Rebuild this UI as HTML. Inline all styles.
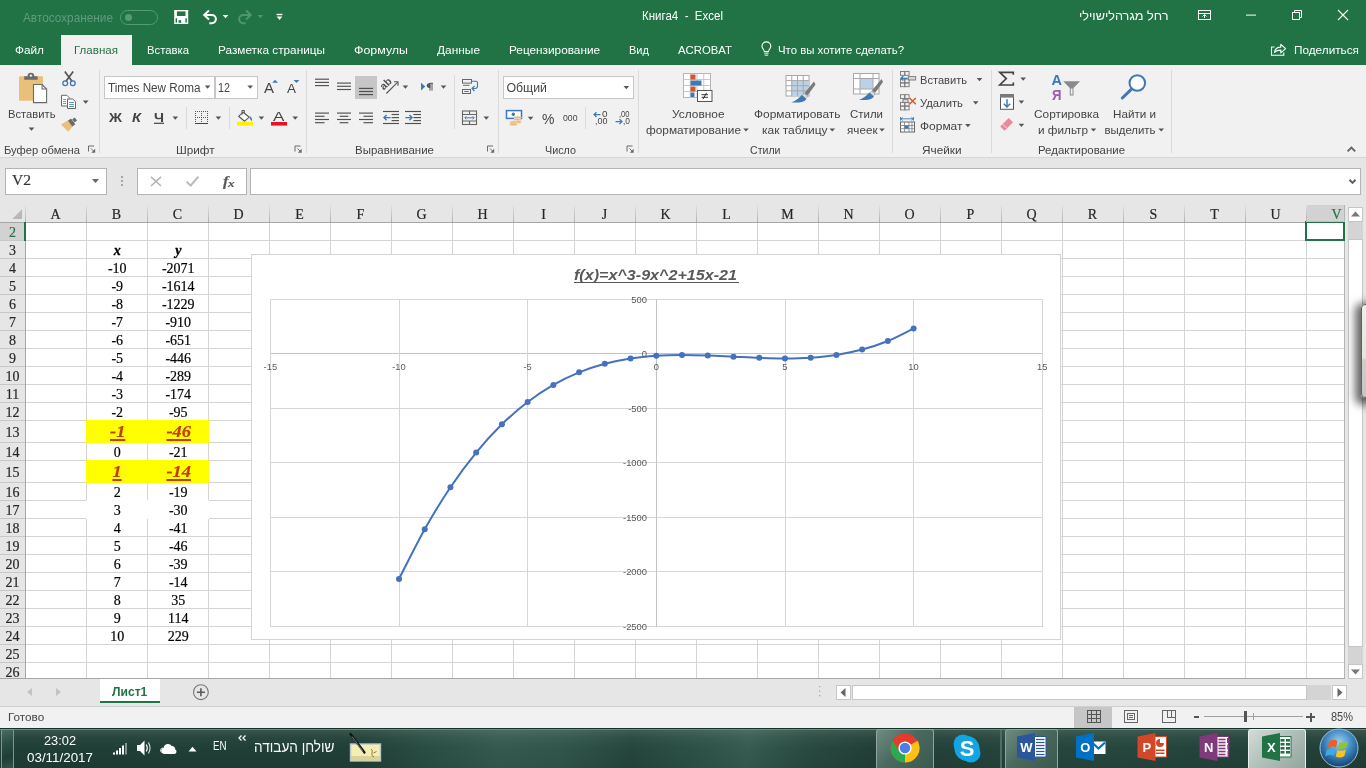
<!DOCTYPE html>
<html><head><meta charset="utf-8"><title>Excel</title>
<style>
html,body{margin:0;padding:0;}
body{width:1366px;height:768px;overflow:hidden;position:relative;background:#e6e6e6;font-family:"Liberation Sans",sans-serif;}
body div, body svg, body span.t{position:absolute;box-sizing:border-box;}
span.t{white-space:pre;transform-origin:0 50%;}
span.sf{font-family:"Liberation Serif",serif;-webkit-text-stroke:0.18px currentColor;}
span.mo{font-family:"Liberation Mono",monospace;}
#root{left:0;top:0;width:1366px;height:768px;overflow:hidden;will-change:transform;}
</style></head><body><div id="root">
<div style="left:0px;top:0px;width:1366px;height:65px;background:#217346;"></div><div style="left:0px;top:65px;width:1366px;height:93px;background:#f1f1f1;"></div><div style="left:0px;top:157px;width:1366px;height:1px;background:#d6d6d6;"></div><div style="left:0px;top:158px;width:1366px;height:47px;background:#e6e6e6;"></div><div style="left:61px;top:35px;width:71px;height:30px;background:#f1f1f1;"></div><span class="t" style="left:23px;top:9.50px;font-size:12.6px;line-height:16px;color:#5f9c7d;transform:scaleX(0.9373);">Автосохранение</span><div style="left:120px;top:9.5px;width:38px;height:15.5px;border:1px solid #549a74;border-radius:8px;"></div><div style="left:124.5px;top:13.5px;width:7.5px;height:7.5px;border-radius:50%;background:#549a74;"></div><span class="t" style="left:642px;top:7.60px;font-size:12.3px;line-height:16px;color:#fff;transform:scaleX(0.9359);">Книга4  -  Excel</span><span class="t" style="left:1078.5px;top:7.60px;font-size:12.5px;line-height:16px;color:#fff;transform:scaleX(1.0160);">רחל מגרהלישוילי</span><span class="t" style="left:15px;top:42.50px;font-size:11.8px;line-height:15px;color:#fff;">Файл</span><span class="t" style="left:74px;top:42.50px;font-size:11.8px;line-height:15px;color:#217346;transform:scaleX(0.9798);">Главная</span><span class="t" style="left:147px;top:42.50px;font-size:11.8px;line-height:15px;color:#fff;transform:scaleX(0.9576);">Вставка</span><span class="t" style="left:218px;top:42.50px;font-size:11.8px;line-height:15px;color:#fff;">Разметка страницы</span><span class="t" style="left:354px;top:42.50px;font-size:11.8px;line-height:15px;color:#fff;transform:scaleX(1.0517);">Формулы</span><span class="t" style="left:437px;top:42.50px;font-size:11.8px;line-height:15px;color:#fff;transform:scaleX(1.0088);">Данные</span><span class="t" style="left:509px;top:42.50px;font-size:11.8px;line-height:15px;color:#fff;">Рецензирование</span><span class="t" style="left:629px;top:42.50px;font-size:11.8px;line-height:15px;color:#fff;transform:scaleX(0.9370);">Вид</span><span class="t" style="left:678px;top:42.50px;font-size:11.8px;line-height:15px;color:#fff;transform:scaleX(0.9616);">ACROBAT</span><span class="t" style="left:778px;top:42.50px;font-size:11.8px;line-height:15px;color:#fff;transform:scaleX(0.9661);">Что вы хотите сделать?</span><span class="t" style="left:1294px;top:42.50px;font-size:11.8px;line-height:15px;color:#fff;transform:scaleX(0.9976);">Поделиться</span><div style="left:0px;top:205px;width:1345px;height:474px;background:#fff;"></div><div style="left:0px;top:205px;width:1345px;height:17px;background:#e6e6e6;"></div><div style="left:0px;top:222px;width:25px;height:457px;background:#e6e6e6;"></div><div style="left:1306px;top:205px;width:39px;height:17px;background:#d2d2d2;"></div><div style="left:0px;top:223px;width:25px;height:17px;background:#d2d2d2;"></div><svg style="left:0;top:0" width="1366" height="768" shape-rendering="crispEdges"><defs><linearGradient id="hsep" x1="0" y1="0" x2="0" y2="1"><stop offset="0" stop-color="#e0e0e0"/><stop offset="1" stop-color="#b2b2b2"/></linearGradient></defs><rect x="25" y="240" width="1320" height="1" fill="#d4d4d4"/><rect x="0" y="240" width="25" height="1" fill="#c8c8c8"/><rect x="25" y="258" width="1320" height="1" fill="#d4d4d4"/><rect x="0" y="258" width="25" height="1" fill="#c8c8c8"/><rect x="25" y="276" width="1320" height="1" fill="#d4d4d4"/><rect x="0" y="276" width="25" height="1" fill="#c8c8c8"/><rect x="25" y="294" width="1320" height="1" fill="#d4d4d4"/><rect x="0" y="294" width="25" height="1" fill="#c8c8c8"/><rect x="25" y="312" width="1320" height="1" fill="#d4d4d4"/><rect x="0" y="312" width="25" height="1" fill="#c8c8c8"/><rect x="25" y="330" width="1320" height="1" fill="#d4d4d4"/><rect x="0" y="330" width="25" height="1" fill="#c8c8c8"/><rect x="25" y="348" width="1320" height="1" fill="#d4d4d4"/><rect x="0" y="348" width="25" height="1" fill="#c8c8c8"/><rect x="25" y="366" width="1320" height="1" fill="#d4d4d4"/><rect x="0" y="366" width="25" height="1" fill="#c8c8c8"/><rect x="25" y="384" width="1320" height="1" fill="#d4d4d4"/><rect x="0" y="384" width="25" height="1" fill="#c8c8c8"/><rect x="25" y="402" width="1320" height="1" fill="#d4d4d4"/><rect x="0" y="402" width="25" height="1" fill="#c8c8c8"/><rect x="25" y="420" width="1320" height="1" fill="#d4d4d4"/><rect x="0" y="420" width="25" height="1" fill="#c8c8c8"/><rect x="25" y="442" width="1320" height="1" fill="#d4d4d4"/><rect x="0" y="442" width="25" height="1" fill="#c8c8c8"/><rect x="25" y="460" width="1320" height="1" fill="#d4d4d4"/><rect x="0" y="460" width="25" height="1" fill="#c8c8c8"/><rect x="25" y="482" width="1320" height="1" fill="#d4d4d4"/><rect x="0" y="482" width="25" height="1" fill="#c8c8c8"/><rect x="25" y="500" width="1320" height="1" fill="#d4d4d4"/><rect x="0" y="500" width="25" height="1" fill="#c8c8c8"/><rect x="25" y="518" width="1320" height="1" fill="#d4d4d4"/><rect x="0" y="518" width="25" height="1" fill="#c8c8c8"/><rect x="25" y="536" width="1320" height="1" fill="#d4d4d4"/><rect x="0" y="536" width="25" height="1" fill="#c8c8c8"/><rect x="25" y="554" width="1320" height="1" fill="#d4d4d4"/><rect x="0" y="554" width="25" height="1" fill="#c8c8c8"/><rect x="25" y="572" width="1320" height="1" fill="#d4d4d4"/><rect x="0" y="572" width="25" height="1" fill="#c8c8c8"/><rect x="25" y="590" width="1320" height="1" fill="#d4d4d4"/><rect x="0" y="590" width="25" height="1" fill="#c8c8c8"/><rect x="25" y="608" width="1320" height="1" fill="#d4d4d4"/><rect x="0" y="608" width="25" height="1" fill="#c8c8c8"/><rect x="25" y="626" width="1320" height="1" fill="#d4d4d4"/><rect x="0" y="626" width="25" height="1" fill="#c8c8c8"/><rect x="25" y="644" width="1320" height="1" fill="#d4d4d4"/><rect x="0" y="644" width="25" height="1" fill="#c8c8c8"/><rect x="25" y="662" width="1320" height="1" fill="#d4d4d4"/><rect x="0" y="662" width="25" height="1" fill="#c8c8c8"/><rect x="86" y="223" width="1" height="456" fill="#d4d4d4"/><rect x="86" y="205" width="1" height="17" fill="url(#hsep)"/><rect x="147" y="223" width="1" height="456" fill="#d4d4d4"/><rect x="147" y="205" width="1" height="17" fill="url(#hsep)"/><rect x="208" y="223" width="1" height="456" fill="#d4d4d4"/><rect x="208" y="205" width="1" height="17" fill="url(#hsep)"/><rect x="269" y="223" width="1" height="456" fill="#d4d4d4"/><rect x="269" y="205" width="1" height="17" fill="url(#hsep)"/><rect x="330" y="223" width="1" height="456" fill="#d4d4d4"/><rect x="330" y="205" width="1" height="17" fill="url(#hsep)"/><rect x="391" y="223" width="1" height="456" fill="#d4d4d4"/><rect x="391" y="205" width="1" height="17" fill="url(#hsep)"/><rect x="452" y="223" width="1" height="456" fill="#d4d4d4"/><rect x="452" y="205" width="1" height="17" fill="url(#hsep)"/><rect x="513" y="223" width="1" height="456" fill="#d4d4d4"/><rect x="513" y="205" width="1" height="17" fill="url(#hsep)"/><rect x="574" y="223" width="1" height="456" fill="#d4d4d4"/><rect x="574" y="205" width="1" height="17" fill="url(#hsep)"/><rect x="635" y="223" width="1" height="456" fill="#d4d4d4"/><rect x="635" y="205" width="1" height="17" fill="url(#hsep)"/><rect x="696" y="223" width="1" height="456" fill="#d4d4d4"/><rect x="696" y="205" width="1" height="17" fill="url(#hsep)"/><rect x="757" y="223" width="1" height="456" fill="#d4d4d4"/><rect x="757" y="205" width="1" height="17" fill="url(#hsep)"/><rect x="818" y="223" width="1" height="456" fill="#d4d4d4"/><rect x="818" y="205" width="1" height="17" fill="url(#hsep)"/><rect x="879" y="223" width="1" height="456" fill="#d4d4d4"/><rect x="879" y="205" width="1" height="17" fill="url(#hsep)"/><rect x="940" y="223" width="1" height="456" fill="#d4d4d4"/><rect x="940" y="205" width="1" height="17" fill="url(#hsep)"/><rect x="1001" y="223" width="1" height="456" fill="#d4d4d4"/><rect x="1001" y="205" width="1" height="17" fill="url(#hsep)"/><rect x="1062" y="223" width="1" height="456" fill="#d4d4d4"/><rect x="1062" y="205" width="1" height="17" fill="url(#hsep)"/><rect x="1123" y="223" width="1" height="456" fill="#d4d4d4"/><rect x="1123" y="205" width="1" height="17" fill="url(#hsep)"/><rect x="1184" y="223" width="1" height="456" fill="#d4d4d4"/><rect x="1184" y="205" width="1" height="17" fill="url(#hsep)"/><rect x="1245" y="223" width="1" height="456" fill="#d4d4d4"/><rect x="1245" y="205" width="1" height="17" fill="url(#hsep)"/><rect x="1306" y="223" width="1" height="456" fill="#d4d4d4"/><rect x="1306" y="205" width="1" height="17" fill="url(#hsep)"/><rect x="0" y="222" width="1345" height="1" fill="#a6a6a6"/><rect x="25" y="205" width="1" height="17" fill="url(#hsep)"/><rect x="25" y="222" width="1" height="457" fill="#a6a6a6"/><rect x="1344" y="205" width="1" height="474" fill="#b4b4b4"/><rect x="0" y="678" width="1345" height="1" fill="#a6a6a6"/><rect x="86" y="420" width="123" height="23" fill="#ffff00"/><rect x="86" y="460" width="123" height="23" fill="#ffff00"/><rect x="86" y="500" width="123" height="19" fill="#fff"/><rect x="24" y="222" width="2" height="19" fill="#217346"/><polygon points="22,209.3 22,219 12.3,219" fill="#b8b8b8" shape-rendering="auto"/><rect x="1306" y="222" width="38" height="18" fill="none" stroke="#217346" stroke-width="2"/><rect x="1306" y="221" width="39" height="1" fill="#9fd5b7"/></svg><span class="t sf" style="left:50.44px;top:206.00px;font-size:14px;line-height:18px;color:#262626;">A</span><span class="t sf" style="left:111.83px;top:206.00px;font-size:14px;line-height:18px;color:#262626;">B</span><span class="t sf" style="left:172.83px;top:206.00px;font-size:14px;line-height:18px;color:#262626;">C</span><span class="t sf" style="left:233.44px;top:206.00px;font-size:14px;line-height:18px;color:#262626;">D</span><span class="t sf" style="left:295.22px;top:206.00px;font-size:14px;line-height:18px;color:#262626;">E</span><span class="t sf" style="left:356.6px;top:206.00px;font-size:14px;line-height:18px;color:#262626;">F</span><span class="t sf" style="left:416.44px;top:206.00px;font-size:14px;line-height:18px;color:#262626;">G</span><span class="t sf" style="left:477.44px;top:206.00px;font-size:14px;line-height:18px;color:#262626;">H</span><span class="t sf" style="left:541.16px;top:206.00px;font-size:14px;line-height:18px;color:#262626;">I</span><span class="t sf" style="left:601.77px;top:206.00px;font-size:14px;line-height:18px;color:#262626;">J</span><span class="t sf" style="left:660.44px;top:206.00px;font-size:14px;line-height:18px;color:#262626;">K</span><span class="t sf" style="left:722.22px;top:206.00px;font-size:14px;line-height:18px;color:#262626;">L</span><span class="t sf" style="left:781.27px;top:206.00px;font-size:14px;line-height:18px;color:#262626;">M</span><span class="t sf" style="left:843.44px;top:206.00px;font-size:14px;line-height:18px;color:#262626;">N</span><span class="t sf" style="left:904.44px;top:206.00px;font-size:14px;line-height:18px;color:#262626;">O</span><span class="t sf" style="left:966.6px;top:206.00px;font-size:14px;line-height:18px;color:#262626;">P</span><span class="t sf" style="left:1026.44px;top:206.00px;font-size:14px;line-height:18px;color:#262626;">Q</span><span class="t sf" style="left:1087.83px;top:206.00px;font-size:14px;line-height:18px;color:#262626;">R</span><span class="t sf" style="left:1149.6px;top:206.00px;font-size:14px;line-height:18px;color:#262626;">S</span><span class="t sf" style="left:1210.22px;top:206.00px;font-size:14px;line-height:18px;color:#262626;">T</span><span class="t sf" style="left:1270.44px;top:206.00px;font-size:14px;line-height:18px;color:#262626;">U</span><span class="t sf" style="left:1331.44px;top:206.00px;font-size:14px;line-height:18px;color:#217346;">V</span><span class="t sf" style="left:9.0px;top:223.50px;font-size:14px;line-height:18px;color:#217346;">2</span><span class="t sf" style="left:9.0px;top:241.50px;font-size:14px;line-height:18px;color:#262626;">3</span><span class="t sf" style="left:9.0px;top:259.50px;font-size:14px;line-height:18px;color:#262626;">4</span><span class="t sf" style="left:9.0px;top:277.50px;font-size:14px;line-height:18px;color:#262626;">5</span><span class="t sf" style="left:9.0px;top:295.50px;font-size:14px;line-height:18px;color:#262626;">6</span><span class="t sf" style="left:9.0px;top:313.50px;font-size:14px;line-height:18px;color:#262626;">7</span><span class="t sf" style="left:9.0px;top:331.50px;font-size:14px;line-height:18px;color:#262626;">8</span><span class="t sf" style="left:9.0px;top:349.50px;font-size:14px;line-height:18px;color:#262626;">9</span><span class="t sf" style="left:5.5px;top:367.50px;font-size:14px;line-height:18px;color:#262626;">10</span><span class="t sf" style="left:5.76px;top:385.50px;font-size:14px;line-height:18px;color:#262626;">11</span><span class="t sf" style="left:5.5px;top:403.50px;font-size:14px;line-height:18px;color:#262626;">12</span><span class="t sf" style="left:5.5px;top:423.50px;font-size:14px;line-height:18px;color:#262626;">13</span><span class="t sf" style="left:5.5px;top:443.50px;font-size:14px;line-height:18px;color:#262626;">14</span><span class="t sf" style="left:5.5px;top:463.50px;font-size:14px;line-height:18px;color:#262626;">15</span><span class="t sf" style="left:5.5px;top:483.50px;font-size:14px;line-height:18px;color:#262626;">16</span><span class="t sf" style="left:5.5px;top:501.50px;font-size:14px;line-height:18px;color:#262626;">17</span><span class="t sf" style="left:5.5px;top:519.50px;font-size:14px;line-height:18px;color:#262626;">18</span><span class="t sf" style="left:5.5px;top:537.50px;font-size:14px;line-height:18px;color:#262626;">19</span><span class="t sf" style="left:5.5px;top:555.50px;font-size:14px;line-height:18px;color:#262626;">20</span><span class="t sf" style="left:5.5px;top:573.50px;font-size:14px;line-height:18px;color:#262626;">21</span><span class="t sf" style="left:5.5px;top:591.50px;font-size:14px;line-height:18px;color:#262626;">22</span><span class="t sf" style="left:5.5px;top:609.50px;font-size:14px;line-height:18px;color:#262626;">23</span><span class="t sf" style="left:5.5px;top:627.50px;font-size:14px;line-height:18px;color:#262626;">24</span><span class="t sf" style="left:5.5px;top:645.50px;font-size:14px;line-height:18px;color:#262626;">25</span><span class="t sf" style="left:5.5px;top:663.50px;font-size:14px;line-height:18px;color:#262626;">26</span><span class="t sf" style="left:113.8px;top:242.20px;font-size:14px;line-height:18px;color:#000;font-weight:700;font-style:italic;-webkit-text-stroke:0.3px #000;">x</span><span class="t sf" style="left:175.19px;top:242.20px;font-size:14px;line-height:18px;color:#000;font-weight:700;font-style:italic;-webkit-text-stroke:0.3px #000;">y</span><span class="t sf" style="left:107.96px;top:260.20px;font-size:14px;line-height:18px;color:#000;">-10</span><span class="t sf" style="left:161.96px;top:260.20px;font-size:14px;line-height:18px;color:#000;">-2071</span><span class="t sf" style="left:111.46px;top:278.20px;font-size:14px;line-height:18px;color:#000;">-9</span><span class="t sf" style="left:161.96px;top:278.20px;font-size:14px;line-height:18px;color:#000;">-1614</span><span class="t sf" style="left:111.46px;top:296.20px;font-size:14px;line-height:18px;color:#000;">-8</span><span class="t sf" style="left:161.96px;top:296.20px;font-size:14px;line-height:18px;color:#000;">-1229</span><span class="t sf" style="left:111.46px;top:314.20px;font-size:14px;line-height:18px;color:#000;">-7</span><span class="t sf" style="left:165.46px;top:314.20px;font-size:14px;line-height:18px;color:#000;">-910</span><span class="t sf" style="left:111.46px;top:332.20px;font-size:14px;line-height:18px;color:#000;">-6</span><span class="t sf" style="left:165.46px;top:332.20px;font-size:14px;line-height:18px;color:#000;">-651</span><span class="t sf" style="left:111.46px;top:350.20px;font-size:14px;line-height:18px;color:#000;">-5</span><span class="t sf" style="left:165.46px;top:350.20px;font-size:14px;line-height:18px;color:#000;">-446</span><span class="t sf" style="left:111.46px;top:368.20px;font-size:14px;line-height:18px;color:#000;">-4</span><span class="t sf" style="left:165.46px;top:368.20px;font-size:14px;line-height:18px;color:#000;">-289</span><span class="t sf" style="left:111.46px;top:386.20px;font-size:14px;line-height:18px;color:#000;">-3</span><span class="t sf" style="left:165.46px;top:386.20px;font-size:14px;line-height:18px;color:#000;">-174</span><span class="t sf" style="left:111.46px;top:404.20px;font-size:14px;line-height:18px;color:#000;">-2</span><span class="t sf" style="left:168.96px;top:404.20px;font-size:14px;line-height:18px;color:#000;">-95</span><span class="t sf" style="left:110.64px;top:421.00px;font-size:16px;line-height:21px;color:#c43a08;font-weight:700;font-style:italic;text-decoration:underline;transform:scaleX(1.15);transform-origin:50% 50%;text-decoration-thickness:1.8px;text-underline-offset:1.6px;">-1</span><span class="t sf" style="left:167.64px;top:421.00px;font-size:16px;line-height:21px;color:#c43a08;font-weight:700;font-style:italic;text-decoration:underline;transform:scaleX(1.15);transform-origin:50% 50%;text-decoration-thickness:1.8px;text-underline-offset:1.6px;">-46</span><span class="t sf" style="left:113.8px;top:444.20px;font-size:14px;line-height:18px;color:#000;">0</span><span class="t sf" style="left:168.96px;top:444.20px;font-size:14px;line-height:18px;color:#000;">-21</span><span class="t sf" style="left:113.3px;top:461.00px;font-size:16px;line-height:21px;color:#c43a08;font-weight:700;font-style:italic;text-decoration:underline;transform:scaleX(1.15);transform-origin:50% 50%;text-decoration-thickness:1.8px;text-underline-offset:1.6px;">1</span><span class="t sf" style="left:167.64px;top:461.00px;font-size:16px;line-height:21px;color:#c43a08;font-weight:700;font-style:italic;text-decoration:underline;transform:scaleX(1.15);transform-origin:50% 50%;text-decoration-thickness:1.8px;text-underline-offset:1.6px;">-14</span><span class="t sf" style="left:113.8px;top:484.20px;font-size:14px;line-height:18px;color:#000;">2</span><span class="t sf" style="left:168.96px;top:484.20px;font-size:14px;line-height:18px;color:#000;">-19</span><span class="t sf" style="left:113.8px;top:502.20px;font-size:14px;line-height:18px;color:#000;">3</span><span class="t sf" style="left:168.96px;top:502.20px;font-size:14px;line-height:18px;color:#000;">-30</span><span class="t sf" style="left:113.8px;top:520.20px;font-size:14px;line-height:18px;color:#000;">4</span><span class="t sf" style="left:168.96px;top:520.20px;font-size:14px;line-height:18px;color:#000;">-41</span><span class="t sf" style="left:113.8px;top:538.20px;font-size:14px;line-height:18px;color:#000;">5</span><span class="t sf" style="left:168.96px;top:538.20px;font-size:14px;line-height:18px;color:#000;">-46</span><span class="t sf" style="left:113.8px;top:556.20px;font-size:14px;line-height:18px;color:#000;">6</span><span class="t sf" style="left:168.96px;top:556.20px;font-size:14px;line-height:18px;color:#000;">-39</span><span class="t sf" style="left:113.8px;top:574.20px;font-size:14px;line-height:18px;color:#000;">7</span><span class="t sf" style="left:168.96px;top:574.20px;font-size:14px;line-height:18px;color:#000;">-14</span><span class="t sf" style="left:113.8px;top:592.20px;font-size:14px;line-height:18px;color:#000;">8</span><span class="t sf" style="left:171.3px;top:592.20px;font-size:14px;line-height:18px;color:#000;">35</span><span class="t sf" style="left:113.8px;top:610.20px;font-size:14px;line-height:18px;color:#000;">9</span><span class="t sf" style="left:168.06px;top:610.20px;font-size:14px;line-height:18px;color:#000;">114</span><span class="t sf" style="left:110.3px;top:628.20px;font-size:14px;line-height:18px;color:#000;">10</span><span class="t sf" style="left:167.8px;top:628.20px;font-size:14px;line-height:18px;color:#000;">229</span><svg style="left:0;top:0" width="1366" height="768"><g shape-rendering="crispEdges"><rect x="251" y="254" width="810" height="386" fill="#d4d4d4"/><rect x="252" y="255" width="808" height="384" fill="#fff"/><rect x="270" y="299" width="773" height="1" fill="#d6d6d6"/><rect x="270" y="353" width="773" height="1" fill="#c4c4c4"/><rect x="270" y="408" width="773" height="1" fill="#d6d6d6"/><rect x="270" y="462" width="773" height="1" fill="#d6d6d6"/><rect x="270" y="517" width="773" height="1" fill="#d6d6d6"/><rect x="270" y="571" width="773" height="1" fill="#d6d6d6"/><rect x="270" y="626" width="773" height="1" fill="#d6d6d6"/><rect x="270" y="299" width="1" height="328" fill="#d6d6d6"/><rect x="399" y="299" width="1" height="328" fill="#d6d6d6"/><rect x="527" y="299" width="1" height="328" fill="#d6d6d6"/><rect x="656" y="299" width="1" height="328" fill="#c4c4c4"/><rect x="785" y="299" width="1" height="328" fill="#d6d6d6"/><rect x="913" y="299" width="1" height="328" fill="#d6d6d6"/><rect x="1042" y="299" width="1" height="328" fill="#d6d6d6"/></g><path d="M399.00,578.99 C403.29,570.70 416.15,544.50 424.73,529.21 C433.31,513.93 441.88,500.06 450.46,487.27 C459.04,474.49 467.61,463.02 476.19,452.53 C484.77,442.03 493.34,432.74 501.92,424.31 C510.50,415.89 519.07,408.55 527.65,401.98 C536.23,395.41 544.80,389.82 553.38,384.88 C561.96,379.94 570.53,375.88 579.11,372.35 C587.69,368.83 596.26,366.07 604.84,363.75 C613.42,361.42 621.99,359.75 630.57,358.41 C639.15,357.07 647.72,356.27 656.30,355.69 C664.88,355.11 673.45,354.96 682.03,354.93 C690.61,354.89 699.18,355.18 707.76,355.47 C716.34,355.76 724.91,356.27 733.49,356.67 C742.07,357.07 750.64,357.58 759.22,357.87 C767.80,358.16 776.37,358.45 784.95,358.41 C793.53,358.37 802.10,358.23 810.68,357.65 C819.26,357.07 827.83,356.27 836.41,354.93 C844.99,353.58 853.56,351.91 862.14,349.59 C870.72,347.26 879.29,344.50 887.87,340.98 C896.45,337.46 909.31,330.54 913.60,328.46" fill="none" stroke="#4571be" stroke-width="2" stroke-linecap="round"/><circle cx="399.00" cy="578.99" r="3" fill="#4571be"/><circle cx="424.73" cy="529.21" r="3" fill="#4571be"/><circle cx="450.46" cy="487.27" r="3" fill="#4571be"/><circle cx="476.19" cy="452.53" r="3" fill="#4571be"/><circle cx="501.92" cy="424.31" r="3" fill="#4571be"/><circle cx="527.65" cy="401.98" r="3" fill="#4571be"/><circle cx="553.38" cy="384.88" r="3" fill="#4571be"/><circle cx="579.11" cy="372.35" r="3" fill="#4571be"/><circle cx="604.84" cy="363.75" r="3" fill="#4571be"/><circle cx="630.57" cy="358.41" r="3" fill="#4571be"/><circle cx="656.30" cy="355.69" r="3" fill="#4571be"/><circle cx="682.03" cy="354.93" r="3" fill="#4571be"/><circle cx="707.76" cy="355.47" r="3" fill="#4571be"/><circle cx="733.49" cy="356.67" r="3" fill="#4571be"/><circle cx="759.22" cy="357.87" r="3" fill="#4571be"/><circle cx="784.95" cy="358.41" r="3" fill="#4571be"/><circle cx="810.68" cy="357.65" r="3" fill="#4571be"/><circle cx="836.41" cy="354.93" r="3" fill="#4571be"/><circle cx="862.14" cy="349.59" r="3" fill="#4571be"/><circle cx="887.87" cy="340.98" r="3" fill="#4571be"/><circle cx="913.60" cy="328.46" r="3" fill="#4571be"/></svg><span class="t" style="left:263.62px;top:360.50px;font-size:9.4px;line-height:12px;color:#595959;">-15</span><span class="t" style="left:392.25px;top:360.50px;font-size:9.4px;line-height:12px;color:#595959;">-10</span><span class="t" style="left:523.49px;top:360.50px;font-size:9.4px;line-height:12px;color:#595959;">-5</span><span class="t" style="left:653.69px;top:360.50px;font-size:9.4px;line-height:12px;color:#595959;">0</span><span class="t" style="left:782.32px;top:360.50px;font-size:9.4px;line-height:12px;color:#595959;">5</span><span class="t" style="left:908.35px;top:360.50px;font-size:9.4px;line-height:12px;color:#595959;">10</span><span class="t" style="left:1036.98px;top:360.50px;font-size:9.4px;line-height:12px;color:#595959;">15</span><span class="t" style="left:631.34px;top:293.80px;font-size:9.4px;line-height:12px;color:#595959;">500</span><span class="t" style="left:641.78px;top:348.28px;font-size:9.4px;line-height:12px;color:#595959;">0</span><span class="t" style="left:628.23px;top:402.77px;font-size:9.4px;line-height:12px;color:#595959;">-500</span><span class="t" style="left:623.02px;top:457.25px;font-size:9.4px;line-height:12px;color:#595959;">-1000</span><span class="t" style="left:623.02px;top:511.73px;font-size:9.4px;line-height:12px;color:#595959;">-1500</span><span class="t" style="left:623.02px;top:566.22px;font-size:9.4px;line-height:12px;color:#595959;">-2000</span><span class="t" style="left:623.02px;top:620.70px;font-size:9.4px;line-height:12px;color:#595959;">-2500</span><span class="t" style="left:574px;top:265.60px;font-size:14.4px;line-height:19px;color:#595959;font-weight:700;font-style:italic;transform:scaleX(1.1193);">f(x)=x^3-9x^2+15x-21</span><div style="left:573.5px;top:281.6px;width:165.5px;height:1.3px;background:#595959;"></div><svg style="left:0;top:0" width="1366" height="160"><rect x="174.2" y="10" width="14" height="14" fill="#fff"/><rect x="176.9" y="11.4" width="8.6" height="4.6" fill="#217346"/><rect x="175.6" y="18.2" width="1.4" height="4.4" fill="#217346"/><rect x="185.4" y="18.2" width="1.4" height="4.4" fill="#217346"/><rect x="178.6" y="20.2" width="2.6" height="2.6" fill="#217346"/><path d="M209,10.6 L204.2,15 L209,19.4" stroke="#fff" stroke-width="2" fill="none" stroke-linejoin="miter"/><path d="M204.8,15 H211.8 a4.1,4.1 0 0 1 0,8.2 H209.3" stroke="#fff" stroke-width="2" fill="none"/><polygon points="222.70,15.00 228.30,15.00 225.50,18.20" fill="#fff"/><path d="M246,10.6 L250.8,15 L246,19.4" stroke="#4f9670" stroke-width="2" fill="none"/><path d="M250.2,15 H243.2 a4.1,4.1 0 0 0 0,8.2 H245.7" stroke="#4f9670" stroke-width="2" fill="none"/><polygon points="257.50,15.00 263.10,15.00 260.30,18.20" fill="#4f9670"/><rect x="276.6" y="13.8" width="5.8" height="1.4" fill="#fff"/><polygon points="276.60,16.50 282.40,16.50 279.50,19.90" fill="#fff"/><rect x="1198.5" y="10.5" width="12" height="9" fill="none" stroke="#fff" stroke-width="1"/><rect x="1198.5" y="13" width="12" height="1" fill="#fff"/><path d="M1204.5,18 V14.5 M1202.5,16.5 L1204.5,14.5 L1206.5,16.5" stroke="#fff" stroke-width="1" fill="none"/><rect x="1246" y="14.6" width="10" height="1" fill="#fff"/><rect x="1292.5" y="12.5" width="7" height="7" fill="none" stroke="#fff" stroke-width="1"/><path d="M1294.5,12.5 V10.5 H1301.5 V17.5 H1299.5" fill="none" stroke="#fff" stroke-width="1"/><path d="M1338,10 L1348,20 M1348,10 L1338,20" stroke="#fff" stroke-width="1.1"/><path d="M764.3,51.5 c0,-1.8 -2.3,-2.8 -2.3,-5.2 a4.4,4.4 0 0 1 8.8,0 c0,2.4 -2.3,3.4 -2.3,5.2 z" fill="none" stroke="#fff" stroke-width="1.1"/><rect x="764.2" y="52.6" width="4.4" height="1" fill="#fff"/><rect x="764.6" y="54.6" width="3.6" height="1" fill="#fff"/><path d="M1274.5,47 H1271.5 V55.3 H1283.8 V52.5" fill="none" stroke="#fff" stroke-width="1.1"/><path d="M1274.5,52.3 c0.5,-3.5 3,-5.2 6.3,-5.2 v-2.8 l4.8,4.3 l-4.8,4.3 v-2.8 c-2.6,0 -4.6,0.5 -6.3,2.2 z" fill="none" stroke="#fff" stroke-width="1.1" stroke-linejoin="round"/><rect x="99" y="70" width="1" height="83" fill="#dadada"/><rect x="306" y="70" width="1" height="83" fill="#dadada"/><rect x="498" y="70" width="1" height="83" fill="#dadada"/><rect x="638" y="70" width="1" height="83" fill="#dadada"/><rect x="892" y="70" width="1" height="83" fill="#dadada"/><rect x="991" y="70" width="1" height="83" fill="#dadada"/><rect x="1171" y="70" width="1" height="83" fill="#dadada"/><rect x="454" y="75" width="1" height="54" fill="#dadada"/><rect x="186" y="107" width="1" height="22" fill="#dadada"/><rect x="229" y="107" width="1" height="22" fill="#dadada"/><rect x="585" y="107" width="1" height="22" fill="#dadada"/><path d="M88.5,151.5 V146 H94.0" stroke="#6a6a6a" stroke-width="1" fill="none"/><path d="M91.0,148.5 L94.5,152" stroke="#6a6a6a" stroke-width="1"/><polygon points="95.2,148.8 95.2,152.7 91.3,152.7" fill="#6a6a6a"/><path d="M295,151.5 V146 H300.5" stroke="#6a6a6a" stroke-width="1" fill="none"/><path d="M297.5,148.5 L301,152" stroke="#6a6a6a" stroke-width="1"/><polygon points="301.7,148.8 301.7,152.7 297.8,152.7" fill="#6a6a6a"/><path d="M487.5,151.5 V146 H493.0" stroke="#6a6a6a" stroke-width="1" fill="none"/><path d="M490.0,148.5 L493.5,152" stroke="#6a6a6a" stroke-width="1"/><polygon points="494.2,148.8 494.2,152.7 490.3,152.7" fill="#6a6a6a"/><path d="M627,151.5 V146 H632.5" stroke="#6a6a6a" stroke-width="1" fill="none"/><path d="M629.5,148.5 L633,152" stroke="#6a6a6a" stroke-width="1"/><polygon points="633.7,148.8 633.7,152.7 629.8,152.7" fill="#6a6a6a"/><path d="M1347.6,151.4 L1351.4,147.6 L1355.2,151.4" stroke="#666" stroke-width="2" fill="none"/><rect x="19" y="76.3" width="24" height="24.5" rx="1" fill="#e8c079"/><path d="M24.2,79.8 v-3.6 h3.3 a3.4,3.4 0 0 1 6.8,0 h3.3 v3.6 z" fill="#6b6b6b"/><circle cx="30.9" cy="75.6" r="1.2" fill="#f1f1f1"/><path d="M33.5,84.5 h8.6 l4.5,4.5 v13.6 h-13.1 z" fill="#fff" stroke="#6b6b6b" stroke-width="1.1"/><path d="M42.1,84.5 v4.5 h4.5" fill="none" stroke="#6b6b6b" stroke-width="1.1"/><polygon points="28.60,127.60 34.40,127.60 31.50,130.80" fill="#555"/><path d="M64.8,71.5 L72.2,81.5 M73.2,71.5 L65.8,81.5" stroke="#555" stroke-width="1.7" fill="none"/><circle cx="65.2" cy="83.3" r="2.4" fill="none" stroke="#3e78b5" stroke-width="1.3"/><circle cx="72.8" cy="83.3" r="2.4" fill="none" stroke="#3e78b5" stroke-width="1.3"/><path d="M61.5,95.3 h5.3 l2.4,2.4 v8.3 h-7.7 z" fill="#fff" stroke="#666" stroke-width="1"/><path d="M67.5,99 h5.3 l2.7,2.7 v6.8 h-8 z" fill="#fff" stroke="#666" stroke-width="1"/><path d="M63,99.5 h3.2 M63,101.5 h3.2 M63,103.5 h3.2 M69.3,102.5 h4.4 M69.3,104.5 h4.4 M69.3,106.5 h4.4" stroke="#3a8a9e" stroke-width="0.8" shape-rendering="crispEdges"/><polygon points="82.80,100.60 88.60,100.60 85.70,103.80" fill="#555"/><path d="M61,124.5 L68.5,120 L73,126 L68.3,131.7 Z" fill="#e8c079"/><path d="M68,120.7 L71,118.6 L75.3,124.3 L72.3,126.4 Z" fill="#6b6b6b"/><path d="M72.2,119.3 L74.8,117.6 L77,120.6 L74.4,122.4 Z" fill="#6b6b6b"/><rect x="104.5" y="76.5" width="110" height="22" fill="#fff" stroke="#c6c6c6"/><rect x="215.5" y="76.5" width="42" height="22" fill="#fff" stroke="#c6c6c6"/><polygon points="204.80,85.60 210.40,85.60 207.60,88.80" fill="#555"/><polygon points="247.40,85.60 253.00,85.60 250.20,88.80" fill="#555"/><polygon points="272.2,82.8 278,82.8 275.1,79.8" fill="#3e78b5"/><polygon points="293.6,80 299.4,80 296.5,83" fill="#3e78b5"/><rect x="154" y="122.7" width="10" height="1.2" fill="#444"/><polygon points="172.50,116.60 178.10,116.60 175.30,119.80" fill="#555"/><g shape-rendering="crispEdges"><rect x="195" y="111" width="1" height="1" fill="#555"/><rect x="195" y="113" width="1" height="1" fill="#555"/><rect x="195" y="115" width="1" height="1" fill="#555"/><rect x="195" y="117" width="1" height="1" fill="#555"/><rect x="195" y="119" width="1" height="1" fill="#555"/><rect x="195" y="121" width="1" height="1" fill="#555"/><rect x="201" y="111" width="1" height="1" fill="#555"/><rect x="201" y="113" width="1" height="1" fill="#555"/><rect x="201" y="115" width="1" height="1" fill="#555"/><rect x="201" y="117" width="1" height="1" fill="#555"/><rect x="201" y="119" width="1" height="1" fill="#555"/><rect x="201" y="121" width="1" height="1" fill="#555"/><rect x="207" y="111" width="1" height="1" fill="#555"/><rect x="207" y="113" width="1" height="1" fill="#555"/><rect x="207" y="115" width="1" height="1" fill="#555"/><rect x="207" y="117" width="1" height="1" fill="#555"/><rect x="207" y="119" width="1" height="1" fill="#555"/><rect x="207" y="121" width="1" height="1" fill="#555"/><rect x="195" y="111" width="1" height="1" fill="#555"/><rect x="197" y="111" width="1" height="1" fill="#555"/><rect x="199" y="111" width="1" height="1" fill="#555"/><rect x="201" y="111" width="1" height="1" fill="#555"/><rect x="203" y="111" width="1" height="1" fill="#555"/><rect x="205" y="111" width="1" height="1" fill="#555"/><rect x="207" y="111" width="1" height="1" fill="#555"/><rect x="195" y="117" width="1" height="1" fill="#555"/><rect x="197" y="117" width="1" height="1" fill="#555"/><rect x="199" y="117" width="1" height="1" fill="#555"/><rect x="201" y="117" width="1" height="1" fill="#555"/><rect x="203" y="117" width="1" height="1" fill="#555"/><rect x="205" y="117" width="1" height="1" fill="#555"/><rect x="207" y="117" width="1" height="1" fill="#555"/><rect x="195" y="123" width="13" height="1" fill="#444"/></g><polygon points="215.60,116.60 221.20,116.60 218.40,119.80" fill="#555"/><path d="M243.2,112.2 L249.3,117.2 L244.6,121.2 L238.6,116.3 Z" fill="#fff" stroke="#555" stroke-width="1.1" stroke-linejoin="round"/><path d="M242,110.3 v4.5 M244.3,110.3 v3" stroke="#555" stroke-width="1" fill="none"/><path d="M242,110.5 h2.3" stroke="#555" stroke-width="1"/><path d="M249.6,116 q2.8,1.6 2.4,5 q-2.4,-1.2 -2.4,-5 z" fill="#3e78b5"/><rect x="237" y="122" width="16" height="3.6" fill="#ffef00"/><polygon points="258.60,116.60 264.20,116.60 261.40,119.80" fill="#555"/><rect x="271" y="122" width="16" height="3.6" fill="#e5141f"/><polygon points="292.40,116.60 298.00,116.60 295.20,119.80" fill="#555"/><rect x="315.00" y="78.62" width="14.00" height="1.15" fill="#505050"/><rect x="315.00" y="81.83" width="14.00" height="1.15" fill="#505050"/><rect x="315.00" y="85.02" width="14.00" height="1.15" fill="#505050"/><rect x="337.00" y="82.52" width="14.00" height="1.15" fill="#505050"/><rect x="337.00" y="85.72" width="14.00" height="1.15" fill="#505050"/><rect x="337.00" y="88.92" width="14.00" height="1.15" fill="#505050"/><rect x="355" y="76" width="22" height="23" fill="#c6c6c6"/><rect x="359.00" y="87.83" width="14.00" height="1.15" fill="#505050"/><rect x="359.00" y="90.92" width="14.00" height="1.15" fill="#505050"/><rect x="359.00" y="94.02" width="14.00" height="1.15" fill="#505050"/><g transform="translate(388.2,86.2) rotate(-45)"><text x="0" y="0" font-family="Liberation Sans, sans-serif" font-size="10.5" font-weight="700" fill="#505050" text-anchor="middle">ab</text></g><path d="M386.3,93.5 L397.5,82.3" stroke="#555" stroke-width="1.1"/><path d="M394,81.8 H398 V85.8" stroke="#555" stroke-width="1.1" fill="none"/><polygon points="402.60,85.60 408.20,85.60 405.40,88.80" fill="#555"/><polygon points="421,82.8 421,90.4 425.3,86.6" fill="#3e78b5"/><path d="M430.2,83.3 H429 a2.3,2.3 0 0 0 0,4.6 H430.2 Z" fill="#555"/><path d="M430,83.3 V90.6 M432,83.3 V90.6 M429.5,83.3 H433" stroke="#555" stroke-width="1"/><polygon points="440.70,85.60 446.30,85.60 443.50,88.80" fill="#555"/><rect x="462.5" y="79.5" width="9" height="3.6" fill="none" stroke="#666" stroke-width="1"/><rect x="462.5" y="89.5" width="8" height="4" fill="none" stroke="#666" stroke-width="1"/><path d="M463,85.3 h6.5 M464.3,91.5 h4.4" stroke="#3e78b5" stroke-width="1"/><path d="M471.5,81.3 H476 a1.5,1.5 0 0 1 1.5,1.5 V86 a2.5,2.5 0 0 1 -2.5,2.5 H472.5" fill="none" stroke="#3e78b5" stroke-width="1.1"/><path d="M474.5,86 L472,88.5 L474.5,91" fill="none" stroke="#3e78b5" stroke-width="1.1"/><rect x="315.00" y="112.52" width="14.00" height="1.15" fill="#505050"/><rect x="315.00" y="115.72" width="9.52" height="1.15" fill="#505050"/><rect x="315.00" y="118.92" width="14.00" height="1.15" fill="#505050"/><rect x="315.00" y="122.12" width="9.52" height="1.15" fill="#505050"/><rect x="337.00" y="112.52" width="14.00" height="1.15" fill="#505050"/><rect x="339.66" y="115.72" width="8.68" height="1.15" fill="#505050"/><rect x="337.00" y="118.92" width="14.00" height="1.15" fill="#505050"/><rect x="339.66" y="122.12" width="8.68" height="1.15" fill="#505050"/><rect x="359.00" y="112.52" width="14.00" height="1.15" fill="#505050"/><rect x="363.48" y="115.72" width="9.52" height="1.15" fill="#505050"/><rect x="359.00" y="118.92" width="14.00" height="1.15" fill="#505050"/><rect x="363.48" y="122.12" width="9.52" height="1.15" fill="#505050"/><rect x="383.00" y="110.92" width="16.00" height="1.15" fill="#505050"/><rect x="383.00" y="122.92" width="16.00" height="1.15" fill="#505050"/><rect x="391.60" y="113.92" width="7.40" height="1.15" fill="#505050"/><rect x="391.60" y="117.02" width="7.40" height="1.15" fill="#505050"/><rect x="391.60" y="120.02" width="7.40" height="1.15" fill="#505050"/><path d="M390.6,117.6 H384 M386.6,115 L384,117.6 L386.6,120.2" stroke="#3e78b5" stroke-width="1.4" fill="none"/><rect x="405.00" y="110.92" width="16.00" height="1.15" fill="#505050"/><rect x="405.00" y="122.92" width="16.00" height="1.15" fill="#505050"/><rect x="413.40" y="113.92" width="7.60" height="1.15" fill="#505050"/><rect x="413.40" y="117.02" width="7.60" height="1.15" fill="#505050"/><rect x="413.40" y="120.02" width="7.60" height="1.15" fill="#505050"/><path d="M405.3,117.6 H412 M409.4,115 L412,117.6 L409.4,120.2" stroke="#3e78b5" stroke-width="1.4" fill="none"/><rect x="462.5" y="111" width="14" height="13.5" fill="none" stroke="#666" stroke-width="1.1"/><path d="M462.5,114.5 h14 M462.5,121 h14 M469.5,111 v3.5 M469.5,121 v3.5" stroke="#666" stroke-width="1.1"/><path d="M465,117.8 h9 M466.3,116.3 L464.8,117.8 L466.3,119.3 M472.7,116.3 L474.2,117.8 L472.7,119.3" stroke="#3e78b5" stroke-width="1" fill="none"/><polygon points="483.50,116.60 489.10,116.60 486.30,119.80" fill="#555"/><rect x="503.5" y="76.5" width="130" height="22" fill="#fff" stroke="#c6c6c6"/><polygon points="623.50,86.00 629.10,86.00 626.30,89.20" fill="#555"/><rect x="506.5" y="110.6" width="15" height="7.8" fill="#fff" stroke="#3e78b5" stroke-width="1.5"/><circle cx="513.3" cy="114.2" r="1.7" fill="#3e78b5"/><ellipse cx="517.5" cy="117.5" rx="3.9" ry="1.5" fill="#e9b97c" stroke="#f1f1f1" stroke-width="0.5"/><ellipse cx="517.5" cy="119.8" rx="3.9" ry="1.5" fill="#e9b97c" stroke="#f1f1f1" stroke-width="0.5"/><ellipse cx="517.5" cy="122" rx="3.9" ry="1.5" fill="#e9b97c" stroke="#f1f1f1" stroke-width="0.5"/><ellipse cx="513.5" cy="122.3" rx="3.9" ry="1.5" fill="#e9b97c" stroke="#f1f1f1" stroke-width="0.5"/><ellipse cx="513.5" cy="124.3" rx="3.9" ry="1.5" fill="#e9b97c" stroke="#f1f1f1" stroke-width="0.5"/><polygon points="527.80,116.80 533.40,116.80 530.60,120.00" fill="#555"/><path d="M600.4,114.6 H594 M596.5,112.2 L594,114.6 L596.5,117" stroke="#3e78b5" stroke-width="1.2" fill="none"/><path d="M615.5,121.6 H622 M619.5,119.2 L622,121.6 L619.5,124" stroke="#3e78b5" stroke-width="1.2" fill="none"/><rect x="683.5" y="73.5" width="27" height="24" fill="#fff" stroke="#b5b5b5" stroke-width="1"/><rect x="683.5" y="79" width="27" height="1" fill="#c8c8c8"/><rect x="689.75" y="73.5" width="1" height="24" fill="#c8c8c8"/><rect x="683.5" y="85" width="27" height="1" fill="#c8c8c8"/><rect x="696.50" y="73.5" width="1" height="24" fill="#c8c8c8"/><rect x="683.5" y="91" width="27" height="1" fill="#c8c8c8"/><rect x="703.25" y="73.5" width="1" height="24" fill="#c8c8c8"/><rect x="690.5" y="74.5" width="5" height="5" fill="#d5532f"/><rect x="690.5" y="80.5" width="11" height="5" fill="#3e78b5"/><rect x="690.5" y="86.5" width="5" height="5" fill="#d5532f"/><rect x="690.5" y="92.5" width="4" height="4.5" fill="#3e78b5"/><rect x="697.5" y="90.5" width="14.5" height="11" fill="#fff" stroke="#555" stroke-width="1"/><path d="M701.5,94.7 h6.5 M701.5,97.3 h6.5 M706.6,92.8 L703,99.2" stroke="#333" stroke-width="1"/><polygon points="743.20,128.40 748.80,128.40 746.00,131.60" fill="#555"/><rect x="786" y="75.5" width="23" height="20.5" fill="#fff" stroke="#a8a8a8" stroke-width="1"/><rect x="791.5" y="80.5" width="17" height="15" fill="#bcd0e8"/><rect x="786" y="80.10" width="23" height="1" fill="#a8a8a8"/><rect x="791.25" y="75.5" width="1" height="20.5" fill="#a8a8a8"/><rect x="786" y="85.20" width="23" height="1" fill="#a8a8a8"/><rect x="797.00" y="75.5" width="1" height="20.5" fill="#a8a8a8"/><rect x="786" y="90.30" width="23" height="1" fill="#a8a8a8"/><rect x="802.75" y="75.5" width="1" height="20.5" fill="#a8a8a8"/><path d="M814,81.5 L804.5,93.0 L807.5,95.5 L815.5,84.5 Z" fill="#7a7a7a"/><path d="M804,93.5 L807.5,96.3 L806,98.5 L802.2,95.5 Z" fill="#dcdcdc" stroke="#8a8a8a" stroke-width="0.5"/><path d="M801.7,95.1 L806.4,98.9 Q805,103.0 791.5,102.5 Q798,100.0 801.7,95.1 Z" fill="#3e78b5"/><polygon points="829.50,128.40 835.10,128.40 832.30,131.60" fill="#555"/><rect x="853.5" y="73.5" width="25.5" height="20.5" fill="#fff" stroke="#a8a8a8" stroke-width="1"/><rect x="860" y="78.5" width="13" height="10.5" fill="#bcd0e8"/><rect x="853.5" y="78.0" width="25.5" height="1" fill="#a8a8a8"/><rect x="853.5" y="88.5" width="25.5" height="1" fill="#a8a8a8"/><rect x="859.5" y="73.5" width="1" height="20.5" fill="#a8a8a8"/><rect x="872.5" y="73.5" width="1" height="20.5" fill="#a8a8a8"/><path d="M881.5,79 L872.0,90.5 L875.0,93 L883.0,82 Z" fill="#7a7a7a"/><path d="M871.5,91 L875.0,93.8 L873.5,96 L869.7,93 Z" fill="#dcdcdc" stroke="#8a8a8a" stroke-width="0.5"/><path d="M869.2,92.6 L873.9,96.4 Q872.5,100.5 859.0,100 Q865.5,97.5 869.2,92.6 Z" fill="#3e78b5"/><polygon points="879.20,128.40 884.80,128.40 882.00,131.60" fill="#555"/><rect x="900.50" y="71.50" width="4.3" height="3.8" fill="none" stroke="#777" stroke-width="0.9"/><rect x="904.80" y="71.50" width="4.3" height="3.8" fill="none" stroke="#777" stroke-width="0.9"/><rect x="900.50" y="79.10" width="4.3" height="3.8" fill="none" stroke="#777" stroke-width="0.9"/><rect x="904.80" y="79.10" width="4.3" height="3.8" fill="none" stroke="#777" stroke-width="0.9"/><rect x="900.50" y="82.90" width="4.3" height="3.8" fill="none" stroke="#777" stroke-width="0.9"/><rect x="904.80" y="82.90" width="4.3" height="3.8" fill="none" stroke="#777" stroke-width="0.9"/><rect x="908.3" y="76.6" width="7.4" height="3.4" fill="#d8d8d8" stroke="#777" stroke-width="0.9"/><path d="M907.5,78.3 H901 M903.3,76 L901,78.3 L903.3,80.6" stroke="#3e78b5" stroke-width="1.3" fill="none"/><polygon points="976.70,78.00 982.30,78.00 979.50,81.20" fill="#555"/><rect x="900.50" y="94.70" width="4.3" height="3.8" fill="none" stroke="#777" stroke-width="0.9"/><rect x="904.80" y="94.70" width="4.3" height="3.8" fill="none" stroke="#777" stroke-width="0.9"/><rect x="900.50" y="102.30" width="4.3" height="3.8" fill="none" stroke="#777" stroke-width="0.9"/><rect x="904.80" y="102.30" width="4.3" height="3.8" fill="none" stroke="#777" stroke-width="0.9"/><rect x="900.50" y="106.10" width="4.3" height="3.8" fill="none" stroke="#777" stroke-width="0.9"/><rect x="904.80" y="106.10" width="4.3" height="3.8" fill="none" stroke="#777" stroke-width="0.9"/><rect x="903" y="99.2" width="5" height="3.4" fill="#d8d8d8" stroke="#777" stroke-width="0.9"/><path d="M909.5,98 L915.8,104.3 M915.8,98 L909.5,104.3" stroke="#e0522d" stroke-width="1.4"/><polygon points="972.90,101.20 978.50,101.20 975.70,104.40" fill="#555"/><path d="M900.5,118.8 H913.5 M900.5,117 v3.6 M913.5,117 v3.6 M902.6,117.3 L901,118.8 L902.6,120.3 M911.4,117.3 L913,118.8 L911.4,120.3" stroke="#3e78b5" stroke-width="0.9" fill="none"/><rect x="900.5" y="122" width="14" height="10" fill="#fff" stroke="#666" stroke-width="1"/><rect x="904" y="122" width="0.9" height="10" fill="#8a8a8a"/><rect x="908.5" y="122" width="0.9" height="10" fill="#8a8a8a"/><rect x="911.5" y="122" width="0.9" height="10" fill="#8a8a8a"/><rect x="900.5" y="125" width="14" height="0.9" fill="#8a8a8a"/><rect x="900.5" y="128.3" width="14" height="0.9" fill="#8a8a8a"/><rect x="904.6" y="125.6" width="4" height="3" fill="#3e78b5"/><polygon points="965.10,124.00 970.70,124.00 967.90,127.20" fill="#555"/><path d="M1013.3,74.8 V72.3 H999.8 L1006.3,78.6 L999.8,85 H1013.3 V82.5" fill="none" stroke="#444" stroke-width="1.7" stroke-linejoin="miter"/><polygon points="1020.40,77.60 1026.00,77.60 1023.20,80.80" fill="#555"/><rect x="1000.5" y="94.7" width="13" height="14.6" fill="#fff" stroke="#555" stroke-width="1"/><rect x="1000" y="94.2" width="14" height="3.4" fill="#7a7a7a"/><path d="M1007,99.3 V106.8 M1003.8,103.8 L1007,107 L1010.2,103.8" stroke="#3e78b5" stroke-width="1.5" fill="none"/><polygon points="1018.60,100.60 1024.20,100.60 1021.40,103.80" fill="#555"/><path d="M1008.7,118 L1013,122.3 L1004.5,130.8 L1000.2,126.5 Z" fill="#e88a9d"/><path d="M1002.6,124.1 L1006.9,128.4" stroke="#f6d3da" stroke-width="1"/><polygon points="1018.60,123.80 1024.20,123.80 1021.40,127.00" fill="#555"/><path d="M1063.2,81.2 H1080 L1073.5,88 V95.6 H1069.8 V88 Z" fill="#8a8a8a"/><rect x="1070.8" y="88.5" width="1.7" height="6" fill="#f1f1f1"/><polygon points="1090.70,128.40 1096.30,128.40 1093.50,131.60" fill="#555"/><circle cx="1137.3" cy="83" r="7.8" fill="#fdfdfd" stroke="#3e78b5" stroke-width="2"/><path d="M1131.3,89.3 L1122.3,98" stroke="#3e78b5" stroke-width="3" stroke-linecap="round"/><polygon points="1158.40,128.40 1164.00,128.40 1161.20,131.60" fill="#555"/></svg><span class="t" style="left:7.5px;top:106.50px;font-size:11.4px;line-height:15px;color:#444;transform:scaleX(0.9835);">Вставить</span><span class="t" style="left:3.5px;top:142.50px;font-size:10.8px;line-height:14px;color:#444;transform:scaleX(1.0358);">Буфер обмена</span><span class="t" style="left:107.5px;top:79.50px;font-size:12.3px;line-height:16px;color:#444;transform:scaleX(0.9510);">Times New Roma</span><span class="t" style="left:217.5px;top:79.50px;font-size:12.3px;line-height:16px;color:#444;transform:scaleX(0.8767);">12</span><span class="t" style="left:264px;top:77.50px;font-size:15px;line-height:20px;color:#444;">A</span><span class="t" style="left:286.5px;top:81.00px;font-size:12.5px;line-height:16px;color:#444;transform:scaleX(1.0787);">A</span><span class="t" style="left:108.5px;top:110.30px;font-size:12px;line-height:16px;color:#444;font-weight:700;transform:scaleX(1.1971);">Ж</span><span class="t" style="left:132px;top:110.30px;font-size:12px;line-height:16px;color:#444;font-weight:700;font-style:italic;transform:scaleX(1.2178);">К</span><span class="t" style="left:154px;top:110.30px;font-size:12px;line-height:16px;color:#444;font-weight:700;transform:scaleX(1.1852);">Ч</span><span class="t" style="left:273.3px;top:108.00px;font-size:13.3px;line-height:17px;color:#444;transform:scaleX(1.2845);">A</span><span class="t" style="left:175.5px;top:142.50px;font-size:10.8px;line-height:14px;color:#444;transform:scaleX(1.0836);">Шрифт</span><span class="t" style="left:354.5px;top:142.50px;font-size:10.8px;line-height:14px;color:#444;transform:scaleX(1.0629);">Выравнивание</span><span class="t" style="left:506.5px;top:80.00px;font-size:12.3px;line-height:16px;color:#444;">Общий</span><span class="t" style="left:542.3px;top:108.80px;font-size:15px;line-height:20px;color:#444;transform:scaleX(0.9293);">%</span><span class="t" style="left:562.8px;top:111.80px;font-size:9.6px;line-height:12px;color:#444;transform:scaleX(0.9054);">000</span><span class="t" style="left:602px;top:108.80px;font-size:8.5px;line-height:11px;color:#444;transform:scaleX(1.1617);">0</span><span class="t" style="left:595px;top:116.00px;font-size:8.5px;line-height:11px;color:#444;transform:scaleX(1.0568);">,00</span><span class="t" style="left:619px;top:108.80px;font-size:8.5px;line-height:11px;color:#444;transform:scaleX(0.8877);">,00</span><span class="t" style="left:622.5px;top:116.00px;font-size:8.5px;line-height:11px;color:#444;transform:scaleX(0.9868);">,0</span><span class="t" style="left:544.5px;top:142.50px;font-size:10.8px;line-height:14px;color:#444;transform:scaleX(0.9980);">Число</span><span class="t" style="left:671.5px;top:106.80px;font-size:11.4px;line-height:15px;color:#444;transform:scaleX(1.0438);">Условное</span><span class="t" style="left:646px;top:123.00px;font-size:11.4px;line-height:15px;color:#444;transform:scaleX(1.0388);">форматирование</span><span class="t" style="left:754px;top:106.80px;font-size:11.4px;line-height:15px;color:#444;transform:scaleX(1.0465);">Форматировать</span><span class="t" style="left:761.5px;top:123.00px;font-size:11.4px;line-height:15px;color:#444;transform:scaleX(1.0498);">как таблицу</span><span class="t" style="left:849.5px;top:106.80px;font-size:11.4px;line-height:15px;color:#444;transform:scaleX(1.0052);">Стили</span><span class="t" style="left:846.5px;top:123.00px;font-size:11.4px;line-height:15px;color:#444;transform:scaleX(1.0247);">ячеек</span><span class="t" style="left:750px;top:142.50px;font-size:10.8px;line-height:14px;color:#444;transform:scaleX(0.9804);">Стили</span><span class="t" style="left:919.5px;top:72.80px;font-size:11.4px;line-height:15px;color:#444;transform:scaleX(0.9731);">Вставить</span><span class="t" style="left:919.5px;top:95.80px;font-size:11.4px;line-height:15px;color:#444;transform:scaleX(0.9885);">Удалить</span><span class="t" style="left:919.5px;top:118.50px;font-size:11.4px;line-height:15px;color:#444;transform:scaleX(1.0502);">Формат</span><span class="t" style="left:922px;top:142.50px;font-size:10.8px;line-height:14px;color:#444;transform:scaleX(1.0906);">Ячейки</span><span class="t" style="left:1051.5px;top:70.80px;font-size:14.5px;line-height:19px;color:#3e78b5;font-weight:700;">A</span><span class="t" style="left:1052px;top:85.70px;font-size:14px;line-height:18px;color:#9a5bb4;font-weight:700;transform:scaleX(0.9441);">Я</span><span class="t" style="left:1033.5px;top:107.00px;font-size:11.4px;line-height:15px;color:#444;transform:scaleX(1.0397);">Сортировка</span><span class="t" style="left:1037.5px;top:123.20px;font-size:11.4px;line-height:15px;color:#444;transform:scaleX(1.0306);">и фильтр</span><span class="t" style="left:1112.5px;top:107.00px;font-size:11.4px;line-height:15px;color:#444;transform:scaleX(1.0230);">Найти и</span><span class="t" style="left:1104.5px;top:123.20px;font-size:11.4px;line-height:15px;color:#444;">выделить</span><span class="t" style="left:1037.5px;top:142.50px;font-size:10.8px;line-height:14px;color:#444;transform:scaleX(1.0578);">Редактирование</span><div style="left:5px;top:168px;width:102px;height:27px;background:#fff;border:1px solid #b4b4b4;"></div><span class="t sf" style="left:12px;top:170.20px;font-size:15.3px;line-height:20px;color:#333;transform:scaleX(1.0159);">V2</span><svg style="left:92px;top:179px" width="8" height="5"><polygon points="0,0 7,0 3.5,4" fill="#666"/></svg><svg style="left:120px;top:174px" width="4" height="14" shape-rendering="crispEdges"><rect x="1" y="2" width="2" height="2" fill="#a6a6a6"/><rect x="1" y="6" width="2" height="2" fill="#a6a6a6"/><rect x="1" y="10" width="2" height="2" fill="#a6a6a6"/></svg><div style="left:137px;top:168px;width:110px;height:27px;background:#fff;border:1px solid #b4b4b4;"></div><svg style="left:148px;top:174px" width="92" height="16"><path d="M3,2.8 L13,12 M13,2.8 L3,12" stroke="#b4b4b4" stroke-width="1.6" fill="none"/><path d="M38.6,7.6 L42.6,11.6 L50.4,2.6" stroke="#b8b8b8" stroke-width="2" fill="none"/></svg><span class="t sf" style="left:222.5px;top:171.50px;font-size:14.5px;line-height:19px;color:#5a5a5a;font-weight:700;font-style:italic;transform:scaleX(1.1355);">f</span><span class="t sf" style="left:227.5px;top:176.80px;font-size:10px;line-height:13px;color:#5a5a5a;font-weight:700;font-style:italic;transform:scaleX(1.3000);">x</span><div style="left:250px;top:168px;width:1111px;height:27px;background:#fff;border:1px solid #b4b4b4;"></div><svg style="left:1347px;top:178px" width="11" height="8"><path d="M2.5,1.8 L5.5,4.9 L8.5,1.8" stroke="#606060" stroke-width="2" fill="none"/></svg><div style="left:1345px;top:205px;width:21px;height:474px;background:#e6e6e6;"></div><div style="left:1348px;top:222px;width:15px;height:442px;background:#d4d4d4;"></div><div style="left:1348px;top:207px;width:15px;height:15px;background:#fff;border:1px solid #c6c6c6;"></div><svg style="left:1351px;top:211px" width="9" height="6"><polygon points="0,5.5 4.5,0.5 9,5.5" fill="#777"/></svg><div style="left:1348px;top:239px;width:15px;height:408px;background:#fff;border:1px solid #c6c6c6;"></div><div style="left:1348px;top:664px;width:15px;height:15px;background:#fff;border:1px solid #c6c6c6;"></div><svg style="left:1351px;top:669px" width="9" height="6"><polygon points="0,0.5 4.5,5.5 9,0.5" fill="#777"/></svg><div style="left:0px;top:679px;width:1366px;height:27px;background:#e6e6e6;"></div><svg style="left:24px;top:686px" width="40" height="12"><polygon points="8,2 8,10 3,6" fill="#c3c3c3"/><polygon points="32,2 32,10 37,6" fill="#c3c3c3"/></svg><div style="left:100px;top:679px;width:60px;height:22px;background:#fff;"></div><div style="left:100px;top:700.6px;width:60px;height:2.2px;background:#217346;"></div><span class="t" style="left:112.3px;top:683.50px;font-size:12.3px;line-height:16px;color:#217346;font-weight:700;transform:scaleX(0.9835);">Лист1</span><svg style="left:192px;top:683px" width="18" height="18"><circle cx="8.9" cy="9.2" r="7.4" fill="none" stroke="#777" stroke-width="1.1"/><path d="M8.9,5.2 V13.2 M4.9,9.2 H12.9" stroke="#5a5a5a" stroke-width="1.6"/></svg><svg style="left:818px;top:685px" width="4" height="14"><rect x="1" y="1" width="1.3" height="1.3" fill="#aaa"/><rect x="1" y="5.5" width="1.3" height="1.3" fill="#aaa"/><rect x="1" y="10" width="1.3" height="1.3" fill="#aaa"/></svg><div style="left:836px;top:685px;width:15px;height:15px;background:#fff;border:1px solid #c6c6c6;"></div><svg style="left:840px;top:688px" width="6" height="9"><polygon points="5.5,0 5.5,9 0.5,4.5" fill="#666"/></svg><div style="left:852px;top:685px;width:455px;height:15px;background:#fff;border:1px solid #c6c6c6;"></div><div style="left:1307px;top:685px;width:24px;height:15px;background:#d4d4d4;"></div><div style="left:1332px;top:685px;width:15px;height:15px;background:#fff;border:1px solid #c6c6c6;"></div><svg style="left:1337px;top:688px" width="6" height="9"><polygon points="0.5,0 0.5,9 5.5,4.5" fill="#666"/></svg><div style="left:0px;top:707px;width:1366px;height:21px;background:#f1f1f1;"></div><div style="left:0px;top:706px;width:1366px;height:1px;background:#d0d0d0;"></div><span class="t" style="left:8.3px;top:708.80px;font-size:11.6px;line-height:15px;color:#444;transform:scaleX(1.0108);">Готово</span><div style="left:1074px;top:707px;width:38px;height:21px;background:#c6c6c6;"></div><svg style="left:1086px;top:709px" width="16" height="16" shape-rendering="crispEdges"><rect x="1.5" y="1.5" width="13" height="12" fill="none" stroke="#555" stroke-width="1"/><path d="M1,5.5 H15 M1,9.5 H15 M5.5,1 V14 M10.5,1 V14" stroke="#555" stroke-width="1"/></svg><svg style="left:1123px;top:709px" width="16" height="16" shape-rendering="crispEdges"><rect x="1.5" y="1.5" width="13" height="12" fill="none" stroke="#666" stroke-width="1"/><rect x="4.5" y="4.5" width="7" height="6" fill="none" stroke="#666" stroke-width="1"/><path d="M6,6.5 H10 M6,8.5 H10" stroke="#666" stroke-width="1"/></svg><svg style="left:1161px;top:709px" width="16" height="16" shape-rendering="crispEdges"><rect x="1.5" y="1.5" width="13" height="12" fill="none" stroke="#666" stroke-width="1"/><path d="M6.5,1 V8.5 H15 M10.5,1 V8" stroke="#666" stroke-width="1" fill="none"/></svg><div style="left:1194px;top:716px;width:5px;height:2px;background:#555;"></div><div style="left:1204px;top:716px;width:99px;height:1px;background:#a0a0a0;"></div><div style="left:1253px;top:713px;width:1px;height:7px;background:#a0a0a0;"></div><div style="left:1244px;top:711px;width:3px;height:11px;background:#555;"></div><div style="left:1306px;top:716px;width:9px;height:2px;background:#555;"></div><div style="left:1309.5px;top:712.5px;width:2px;height:9px;background:#555;"></div><span class="t" style="left:1330.5px;top:708.50px;font-size:12px;line-height:16px;color:#444;transform:scaleX(0.9155);">85%</span><div style="left:1360.5px;top:303.5px;width:12px;height:94px;border-radius:4px;border:1px solid #60605c;background:linear-gradient(180deg,#eeeeea 0%,#e6e6e1 57%,#cfcfc7 60%,#c6c6bd 100%);box-shadow:-2px 3px 8px 4px rgba(0,0,0,.6);"></div><div style="left:0px;top:728px;width:1366px;height:40px;background:#203f36;background:linear-gradient(97deg,#1f3e35 0px,#203f36 360px,#2a4d43 425px,#35594f 500px,#31554b 560px,#25463d 630px,#2e5248 700px,#365b50 745px,#294b41 800px,#223f37 870px,#26473e 1100px,#213e36 1366px);"></div><div style="left:0px;top:728px;width:1366px;height:40px;background:linear-gradient(180deg,rgba(255,255,255,.13) 0%,rgba(255,255,255,.04) 25%,rgba(255,255,255,0) 50%,rgba(0,0,0,.06) 100%);"></div><div style="left:0px;top:728px;width:1366px;height:1px;background:#16302a;"></div><div style="left:0px;top:729px;width:1366px;height:1px;background:#6d8a81;"></div><div style="left:1px;top:729px;width:13px;height:40px;border:1px solid #7c978e;background:linear-gradient(160deg,#4a6c62 0%,#2c4f45 35%,#1f3d35 70%,#335749 100%);"></div><span class="t" style="left:44px;top:732.00px;font-size:13.5px;line-height:18px;color:#fff;transform:scaleX(0.9468);">23:02</span><span class="t" style="left:27px;top:748.50px;font-size:13.5px;line-height:18px;color:#fff;transform:scaleX(0.9913);">03/11/2017</span><svg style="left:0;top:727px" width="440" height="41"><rect x="113" y="25.5" width="2" height="2" fill="#fff" opacity="1"/><rect x="116" y="23.5" width="2" height="4" fill="#fff" opacity="1"/><rect x="119" y="21.0" width="2" height="6.5" fill="#fff" opacity="1"/><rect x="122" y="18.5" width="2" height="9" fill="#fff" opacity="1"/><rect x="125" y="16.0" width="2" height="11.5" fill="#fff" opacity="0.45"/><path d="M137,18 h3 l4.5,-4.5 v15 l-4.5,-4.5 h-3 z" fill="#fff"/><path d="M146.3,17.5 q2,3.5 0,7" stroke="#fff" stroke-width="1.1" fill="none"/><path d="M148.4,15.5 q3.2,5.5 0,11" stroke="#fff" stroke-width="1.1" fill="none" opacity=".85"/><path d="M164,27 a3.2,3.2 0 0 1 -0.3,-6.3 a4.3,4.3 0 0 1 8,-1.6 a3.3,3.3 0 0 1 3.6,3.5 a2.4,2.4 0 0 1 -0.6,4.4 z" fill="#fff"/><path d="M161.5,25.5 a2.6,2.6 0 0 1 1.2,-4.6" stroke="#fff" stroke-width="1" fill="none" opacity=".8"/><polygon points="188.5,24.5 196.5,24.5 192.5,19.8" fill="#fff"/><path d="M241.5,8.5 L239,11 L241.5,13.5 M245.5,8.5 L243,11 L245.5,13.5" stroke="#fff" stroke-width="1.3" fill="none"/><rect x="350.5" y="17" width="30" height="17" fill="#f4eeb0" stroke="#b9c4c6" stroke-width="1.4"/><rect x="351" y="29" width="29" height="4.5" fill="#d9d39a"/><path d="M371,22 q2,1 1,4 q-1,3 2,4 M373.5,26 l3,-1.5" stroke="#8a6a3a" stroke-width="0.9" fill="none"/><path d="M350.5,7 L364.5,25.5" stroke="#111" stroke-width="2.2" stroke-linecap="round"/><path d="M352,9.5 L363,24.5" stroke="#9ab" stroke-width="0.7"/></svg><span class="t" style="left:213px;top:738.00px;font-size:12.5px;line-height:16px;color:#fff;transform:scaleX(0.7770);">EN</span><span class="t" style="left:254px;top:738.00px;font-size:14.5px;line-height:19px;color:#fff;transform:scaleX(0.9366);">שולחן העבודה</span><div style="left:876px;top:729px;width:58px;height:39px;border:1px solid #8fa59d;border-bottom:none;border-radius:3px 3px 0 0;background:linear-gradient(135deg,#6f8b82 0%,#4a6a60 45%,#3a5a50 100%);"></div><div style="left:1000px;top:730px;width:2px;height:38px;background:#4f6d63;"></div><div style="left:1005px;top:729px;width:53px;height:39px;border:1px solid #8fa59d;border-bottom:none;border-radius:3px 3px 0 0;background:linear-gradient(135deg,#6f8b82 0%,#4a6a60 45%,#3a5a50 100%);"></div><div style="left:1248px;top:729px;width:58px;height:39px;border:1px solid #e8efec;border-bottom:none;border-radius:3px 3px 0 0;background:linear-gradient(135deg,#d2dbd7 0%,#b3c1bb 45%,#93a59e 100%);"></div><svg style="left:860px;top:727px" width="506" height="41"><circle cx="45" cy="21" r="14.5" fill="#e33b2e"/><path d="M45,21 L32.44,13.75 A14.5,14.5 0 0 0 45.00,35.50 Z" fill="#2da84f"/><path d="M45,21 L45.00,35.50 A14.5,14.5 0 0 0 57.56,13.75 Z" fill="#fbc116"/><path d="M32.44,13.75 L39.40,24.30 L45,21 Z" fill="#e33b2e"/><path d="M45.00,35.50 L42.10,26.80 L51,24.3 Z" fill="#2da84f" opacity="0"/><circle cx="45" cy="21" r="6.6" fill="#fff"/><circle cx="45" cy="21" r="5.2" fill="#4a7fe8"/><circle cx="103" cy="17" r="9.5" fill="#11a5e3"/><circle cx="111" cy="26" r="9.5" fill="#11a5e3"/><circle cx="107" cy="21.5" r="12.5" fill="#11a5e3"/><text x="107" y="29" font-family="Liberation Sans, sans-serif" font-weight="700" font-size="22" fill="#fff" text-anchor="middle">S</text><rect x="170" y="9.5" width="16" height="20.5" fill="#fff" stroke="#2b579a" stroke-width="1"/><rect x="176" y="11.9" width="8.5" height="1.2" fill="#2b579a"/><rect x="176" y="14.9" width="8.5" height="1.2" fill="#2b579a"/><rect x="176" y="17.9" width="8.5" height="1.2" fill="#2b579a"/><rect x="176" y="20.9" width="8.5" height="1.2" fill="#2b579a"/><rect x="176" y="23.9" width="8.5" height="1.2" fill="#2b579a"/><rect x="176" y="26.9" width="8.5" height="1.2" fill="#2b579a"/><polygon points="157,9.5 175,6 175,34 157,30.5" fill="#2b579a"/><text x="166.3" y="25" font-family="Liberation Sans, sans-serif" font-weight="700" font-size="13" fill="#fff" text-anchor="middle">W</text><rect x="230" y="14.5" width="15.5" height="12.5" fill="#fff"/><path d="M232,15.5 l6.5,6 l6.5,-6" stroke="#0072c6" stroke-width="2.2" fill="none"/><polygon points="216,9.5 234,6 234,34 216,30.5" fill="#0072c6"/><text x="225.3" y="25" font-family="Liberation Sans, sans-serif" font-weight="700" font-size="13" fill="#fff" text-anchor="middle">O</text><rect x="290.5" y="9.5" width="16" height="20.5" fill="#fff" stroke="#d24726" stroke-width="1"/><circle cx="300.0" cy="16" r="4" fill="#d24726"/><path d="M300.0,16 v-4.5 a4.5,4.5 0 0 1 4.5,4.5 z" fill="#fff"/><rect x="296.0" y="22.5" width="8.5" height="1.5" fill="#d24726"/><rect x="296.0" y="25.5" width="8.5" height="1.5" fill="#d24726"/><polygon points="277.5,9.5 295.5,6 295.5,34 277.5,30.5" fill="#d24726"/><text x="286.8" y="25" font-family="Liberation Sans, sans-serif" font-weight="700" font-size="13" fill="#fff" text-anchor="middle">P</text><rect x="352.5" y="9.5" width="16" height="20.5" fill="#fff" stroke="#80397b" stroke-width="1"/><rect x="358.5" y="11.7" width="7" height="1.6" fill="#80397b"/><rect x="358.5" y="14.7" width="7" height="1.6" fill="#80397b"/><rect x="358.5" y="17.7" width="7" height="1.6" fill="#80397b"/><rect x="358.5" y="20.7" width="7" height="1.6" fill="#80397b"/><rect x="358.5" y="23.7" width="7" height="1.6" fill="#80397b"/><rect x="358.5" y="26.7" width="7" height="1.6" fill="#80397b"/><rect x="367.0" y="11" width="2.5" height="5" fill="#80397b"/><rect x="367.0" y="17.5" width="2.5" height="5" fill="#80397b" opacity=".7"/><rect x="367.0" y="24" width="2.5" height="5" fill="#80397b" opacity=".5"/><polygon points="339.5,9.5 357.5,6 357.5,34 339.5,30.5" fill="#80397b"/><text x="348.8" y="25" font-family="Liberation Sans, sans-serif" font-weight="700" font-size="13" fill="#fff" text-anchor="middle">N</text><rect x="415" y="9.5" width="16" height="20.5" fill="#fff" stroke="#217346" stroke-width="1"/><rect x="420.5" y="12" width="4" height="2.6" fill="#217346"/><rect x="426" y="12" width="4" height="2.6" fill="#217346"/><rect x="420.5" y="16" width="4" height="2.6" fill="#217346"/><rect x="426" y="16" width="4" height="2.6" fill="#217346"/><rect x="420.5" y="20" width="4" height="2.6" fill="#217346"/><rect x="426" y="20" width="4" height="2.6" fill="#217346"/><rect x="420.5" y="24" width="4" height="2.6" fill="#217346"/><rect x="426" y="24" width="4" height="2.6" fill="#217346"/><polygon points="402,9.5 420,6 420,34 402,30.5" fill="#217346"/><text x="411.3" y="25" font-family="Liberation Sans, sans-serif" font-weight="700" font-size="13" fill="#fff" text-anchor="middle">X</text><defs><radialGradient id="orb" cx="50%" cy="35%" r="65%"><stop offset="0" stop-color="#9fd0ee"/><stop offset=".55" stop-color="#3c86c0"/><stop offset="1" stop-color="#173f6a"/></radialGradient></defs><circle cx="479" cy="21" r="19" fill="url(#orb)" stroke="#9cc4dd" stroke-width="1"/><path d="M469,14.5 q4,-3 8.5,-0.5 l-1.5,6.5 q-4.5,-2.2 -8.7,0.6 z" fill="#e8602c"/><path d="M479.5,14.8 q4.5,2 8.7,-0.8 l-1.7,6.6 q-4,2.6 -8.6,0.6 z" fill="#8cc43c"/><path d="M466.8,22.8 q4.2,-2.8 8.7,-0.6 l-1.6,6.6 q-4.5,-2.3 -8.8,0.6 z" fill="#3fa9e4"/><path d="M477.4,23 q4.6,2 8.6,-0.7 l-1.7,6.6 q-4,2.7 -8.6,0.7 z" fill="#f9c325"/></svg>
</div></body></html>
